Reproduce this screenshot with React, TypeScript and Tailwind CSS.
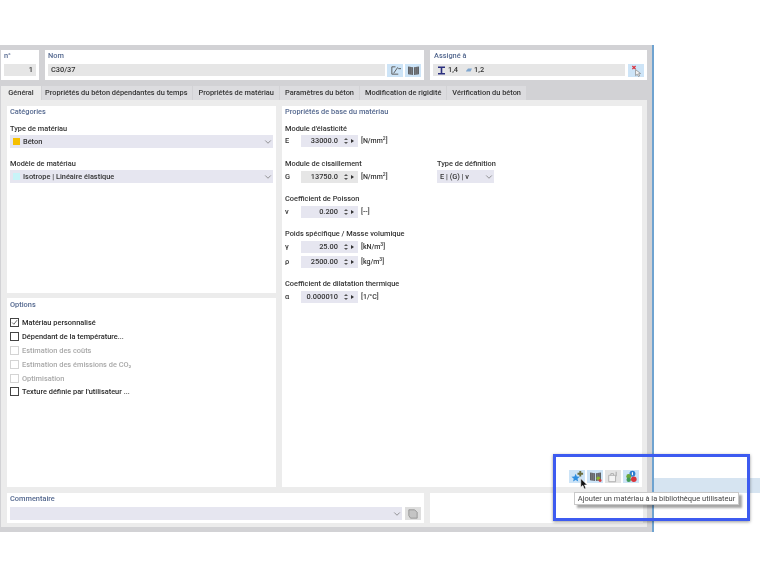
import { ChevronDown } from "lucide-react";

const FONT = "font-['Roboto',sans-serif]";

const TABS = [
  "Général",
  "Propriétés du béton dépendantes du temps",
  "Propriétés de matériau",
  "Paramètres du béton",
  "Modification de rigidité",
  "Vérification du béton",
];

const OPTIONS = [
  { label: "Matériau personnalisé", checked: true },
  { label: "Dépendant de la température..." },
  { label: "Estimation des coûts", disabled: true },
  { label: "Estimation des émissions de CO₂", disabled: true },
  { label: "Optimisation", disabled: true },
  { label: "Texture définie par l'utilisateur ..." },
];

function Title({ children }: { children: React.ReactNode }) {
  return <div className="h-[11px] text-[7.4px] leading-[11px] font-medium text-[#54688f]">{children}</div>;
}

function Label({ children, className = "" }: { children: React.ReactNode; className?: string }) {
  return <div className={`h-[11px] text-[7.4px] leading-[11px] font-medium text-[#333] ${className}`}>{children}</div>;
}

function Select({ swatch, text, className = "" }: { swatch?: string; text?: string; className?: string }) {
  return (
    <div className={`flex h-[13px] items-center bg-[#e6e6f0] pl-[3px] text-[7.4px] font-medium text-[#333] ${className}`}>
      {swatch && <span className="mr-[3px] h-[7px] w-[7px]" style={{ backgroundColor: swatch }} />}
      <span className="flex-1 whitespace-nowrap">{text}</span>
      <ChevronDown className="h-[10px] w-[10px] text-[#666]" strokeWidth={1.6} />
    </div>
  );
}

function Field({ sym, value, unit, gray, sup }: { sym: string; value: string; unit: string; gray?: boolean; sup?: string }) {
  return (
    <div className="flex h-[12px] w-[110px] items-center whitespace-nowrap text-[7.4px] font-medium text-[#333]">
      <span className="w-[16px] shrink-0">{sym}</span>
      <div className={`flex h-[12px] w-[57px] shrink-0 items-center ${gray ? "bg-[#e6e6e6]" : "bg-[#e6e6f0]"}`}>
        <span className="w-[37px] shrink-0 text-right">{value}</span>
        <span className="ml-[5px] flex w-[6px] shrink-0 flex-col items-center gap-[2px]">
          <span className="h-0 w-0 border-x-[2px] border-b-[2px] border-x-transparent border-b-[#555]" />
          <span className="h-0 w-0 border-x-[2px] border-t-[2px] border-x-transparent border-t-[#555]" />
        </span>
        <span className="ml-[2px] h-0 w-0 border-y-[2px] border-l-[3px] border-y-transparent border-l-[#333]" />
      </div>
      <span className="ml-[3px] text-[7px]">
        {unit}
        {sup && <sup className="text-[5px]">{sup}</sup>}
        {sup && "]"}
      </span>
    </div>
  );
}

function OptionRow({ label, checked, disabled }: { label: string; checked?: boolean; disabled?: boolean }) {
  return (
    <div className={`flex h-[13.8px] items-center gap-[3px] text-[7.4px] font-medium ${disabled ? "text-[#a8a8a8]" : "text-[#2a2a2a]"}`}>
      <span className={`flex h-[9px] w-[9px] items-center justify-center border bg-white ${disabled ? "border-[#d4d4d4]" : "border-[#444]"}`}>
        {checked && (
          <svg viewBox="0 0 9 9" className="h-[9px] w-[9px]">
            <path d="M1.5 4.5 L3.7 6.8 L7.8 1.5" fill="none" stroke="#444" strokeWidth="1" />
          </svg>
        )}
      </span>
      {label}
    </div>
  );
}

function IconButton({ className = "bg-[#cde4f7]", children }: { className?: string; children?: React.ReactNode }) {
  return <div className={`flex h-[13px] w-[16px] shrink-0 items-center justify-center ${className}`}>{children}</div>;
}

function BookIcon({ dots }: { dots?: boolean }) {
  return (
    <svg viewBox="0 0 14 12" className="h-[11px] w-[13px]">
      <path d="M1 1.5 L6.5 2.5 V11 L1 10 Z M7.5 2.5 L13 1.5 V10 L7.5 11 Z" fill="#5f6266" />
      <path d="M3 2 V10.3 M5 2.3 V10.6 M9 2.3 V10.6 M11 2 V10.3" stroke="#9a9da2" strokeWidth=".5" />
      {dots && <circle cx="10" cy="8" r="2" fill="#8cb32f" />}
      {dots && <circle cx="12" cy="10.3" r="1.6" fill="#d23a3a" />}
    </svg>
  );
}

function Toolbar() {
  return (
    <div className="absolute left-[569px] top-[470px] flex gap-[2px]">
      <IconButton>
        <svg viewBox="0 0 14 14" className="h-[13px] w-[13px]">
          <path d="M5 4 L6.3 7 L9.5 7.3 L7 9.3 L7.8 12.5 L5 10.8 L2.2 12.5 L3 9.3 L.5 7.3 L3.7 7 Z" fill="#2f8fe0" />
          <path d="M9 1 H11 V3 H13 V5 H11 V7 H9 V5 H7 V3 H9 Z" fill="#6b6d3f" />
        </svg>
      </IconButton>
      <IconButton>
        <BookIcon dots />
      </IconButton>
      <IconButton className="bg-[#e4e4e4]">
        <svg viewBox="0 0 14 14" className="h-[12px] w-[12px]">
          <path d="M2 5 H10 V12.5 H2 Z M4.5 5 V3 H7.5 V5" fill="#f4f4f4" stroke="#a8a8a8" />
          <path d="M10 1 H11.5 V6 H10 Z" fill="#b5b5b5" />
        </svg>
      </IconButton>
      <IconButton>
        <svg viewBox="0 0 14 14" className="h-[13px] w-[13px]">
          <circle cx="8" cy="4" r="3.2" fill="#2d7fd0" />
          <circle cx="4" cy="7" r="2.6" fill="#6aa83a" />
          <circle cx="4" cy="10.5" r="2.4" fill="#3f9a58" />
          <circle cx="9.5" cy="10" r="3" fill="#d8343c" />
          <rect x="7.4" y="2.4" width="1.2" height="3.2" fill="#fff" />
        </svg>
      </IconButton>
    </div>
  );
}

export default function App() {
  return (
    <div className={`relative h-[578px] w-[760px] overflow-hidden bg-white ${FONT} blur-[0.3px]`}>
      <div className="flex pt-[45px]">
        <div className="h-[487px] w-[652px] bg-[#d2d2d5]">
          {/* header panels */}
          <div className="flex gap-[6px] pl-[1px] pt-[5px]">
            <div className="h-[30px] w-[38px] bg-white px-[3px]">
              <Title>n°</Title>
              <div className="mt-[3px] h-[12px] bg-[#e6e6e6] pr-[3px] text-right text-[7.4px] leading-[12px] font-medium text-[#333]">1</div>
            </div>
            <div className="h-[30px] w-[379px] bg-white px-[3px]">
              <Title>Nom</Title>
              <div className="mt-[3px] flex gap-[2px]">
                <div className="h-[12px] w-[337px] shrink-0 bg-[#e6e6e6] pl-[3px] text-[7.4px] leading-[12px] font-medium text-[#333]">C30/37</div>
                <IconButton>
                  <svg viewBox="0 0 14 12" className="h-[11px] w-[13px]">
                    <path d="M3 2 H7 M3 2 V10 H10 M5 9 L9.5 2.5" fill="none" stroke="#555" />
                    <path d="M10 4 H13" stroke="#555" />
                  </svg>
                </IconButton>
                <IconButton>
                  <BookIcon />
                </IconButton>
              </div>
            </div>
            <div className="h-[30px] w-[217px] bg-white px-[3px]">
              <div className="pl-[1px]">
                <Title>Assigné à</Title>
              </div>
              <div className="mt-[3px] flex gap-[3px]">
                <div className="flex h-[12px] w-[192px] shrink-0 items-center bg-[#e6e6e6] pl-[5px] text-[7.4px] font-medium text-[#333]">
                  <svg viewBox="0 0 7 9" className="mr-[3px] h-[9px] w-[7px]">
                    <path d="M0 .5 H7 V2 H4.3 V7 H7 V8.5 H0 V7 H2.7 V2 H0 Z" fill="#2b2f7e" />
                  </svg>
                  <span>1,4</span>
                  <svg viewBox="0 0 6 4" className="ml-[8px] mr-[2px] h-[4px] w-[6px]">
                    <path d="M0 3 L2 .5 H6 L4.5 3.5 H0 Z" fill="#7fa6cf" />
                  </svg>
                  <span>1,2</span>
                </div>
                <IconButton>
                  <svg viewBox="0 0 14 13" className="h-[12px] w-[13px]">
                    <path d="M2.5 1 L6 4.5 M6 1 L2.5 4.5" stroke="#d9343f" strokeWidth="1.4" />
                    <path d="M6 5 L6 11.5 L7.8 10 L9.2 12.5 L10.4 11.8 L9.2 9.5 L11.4 9.2 Z" fill="#f5f5f5" stroke="#777" strokeWidth=".7" />
                  </svg>
                </IconButton>
              </div>
            </div>
          </div>

          {/* tabs */}
          <div className="mt-[6px] flex h-[14px] pl-[1px] text-[7.4px] font-medium text-[#333]">
            {TABS.map((t, i) => (
              <div
                key={t}
                className={`flex items-center whitespace-nowrap ${
                  i === 0
                    ? "w-[40px] justify-center bg-[#ececec]"
                    : i === 1
                      ? "ml-px bg-[#dcdcdf] pl-[3px] pr-[5px]"
                      : "ml-px bg-[#dcdcdf] px-[5px]"
                }`}
              >
                {t}
              </div>
            ))}
          </div>

          {/* body */}
          <div className="ml-[1px] flex h-[427px] w-[646px] flex-col gap-[6px] bg-[#ececec] pl-[6px] pt-[6px]">
            <div className="flex h-[381px] gap-[6px]">
              <div className="flex w-[269px] flex-col gap-[5px]">
                <div className="h-[187px] bg-white px-[3px]">
                  <Title>Catégories</Title>
                  <Label className="mt-[6px]">Type de matériau</Label>
                  <Select className="mt-[1px]" swatch="#f5bf00" text="Béton" />
                  <Label className="mt-[10px]">Modèle de matériau</Label>
                  <Select className="mt-[1px]" swatch="#c8f4f8" text="Isotrope | Linéaire élastique" />
                </div>
                <div className="h-[189px] bg-white px-[3px] pt-[1px]">
                  <Title>Options</Title>
                  <div className="mt-[6px]">
                    {OPTIONS.map((o) => (
                      <OptionRow key={o.label} {...o} />
                    ))}
                  </div>
                </div>
              </div>
              <div className="w-[360px] bg-white px-[3px]">
                <Title>Propriétés de base du matériau</Title>
                <Label className="mt-[6px]">Module d'élasticité</Label>
                <div className="mt-[1px]">
                  <Field sym="E" value="33000.0" unit="[N/mm" sup="2" />
                </div>
                <div className="mt-[11px] flex">
                  <div className="w-[152px] shrink-0">
                    <Label>Module de cisaillement</Label>
                    <div className="mt-[2px]">
                      <Field sym="G" value="13750.0" unit="[N/mm" sup="2" gray />
                    </div>
                  </div>
                  <div>
                    <Label>Type de définition</Label>
                    <Select className="mt-[1px] w-[57px]" text="E | (G) | v" />
                  </div>
                </div>
                <Label className="mt-[10px]">Coefficient de Poisson</Label>
                <div className="mt-[2px]">
                  <Field sym="ν" value="0.200" unit="[--]" />
                </div>
                <Label className="mt-[10px]">Poids spécifique / Masse volumique</Label>
                <div className="mt-[2px] flex flex-col gap-[3px]">
                  <Field sym="γ" value="25.00" unit="[kN/m" sup="3" />
                  <Field sym="ρ" value="2500.00" unit="[kg/m" sup="3" />
                </div>
                <Label className="mt-[10px]">Coefficient de dilatation thermique</Label>
                <div className="mt-[2px]">
                  <Field sym="α" value="0.000010" unit="[1/°C]" />
                </div>
              </div>
            </div>
            <div className="flex h-[30px] gap-[6px]">
              <div className="w-[417px] bg-white px-[3px]">
                <Title>Commentaire</Title>
                <div className="mt-[3px] flex gap-[3px]">
                  <Select className="w-[392px] shrink-0" />
                  <div className="flex h-[13px] w-[16px] shrink-0 items-center justify-center bg-[#dedede]">
                    <svg viewBox="0 0 12 12" className="h-[10px] w-[10px]">
                      <path d="M1 1 H8 L11 4 V11 H3 L1 8 Z" fill="#c4c4c4" stroke="#8f8f8f" />
                    </svg>
                  </div>
                </div>
              </div>
              <div className="w-[213px] bg-white" />
            </div>
          </div>
        </div>
        <div className="h-[487px] w-[2px] bg-[#6fa3d0]" />
        <div className="flex-1">
          <div className="mt-[433px] h-[15px] bg-[#d6e4f1]" />
        </div>
      </div>

      <Toolbar />

      {/* cursor */}
      <svg viewBox="0 0 8 13" className="absolute left-[580px] top-[478px] h-[12px] w-[8px]">
        <path d="M.5 .5 V10 L2.8 8 L4.3 11.8 L6 11 L4.5 7.5 H7.5 Z" fill="#111" stroke="#fff" strokeWidth=".6" />
      </svg>

      {/* tooltip */}
      <div className="absolute left-[574px] top-[492px] flex h-[13px] w-[165px] items-center justify-center whitespace-nowrap border border-[#c9c9c9] bg-white text-[7.5px] text-[#444] shadow-[3px_3px_2px_rgba(0,0,0,0.35)]">
        Ajouter un matériau à la bibliothèque utilisateur
      </div>

      {/* highlight frame */}
      <div className="absolute left-[553px] top-[454px] h-[67px] w-[197px] border-[3px] border-[#3d5bf0] shadow-[0_1px_3px_rgba(0,0,0,0.4)]" />
    </div>
  );
}
